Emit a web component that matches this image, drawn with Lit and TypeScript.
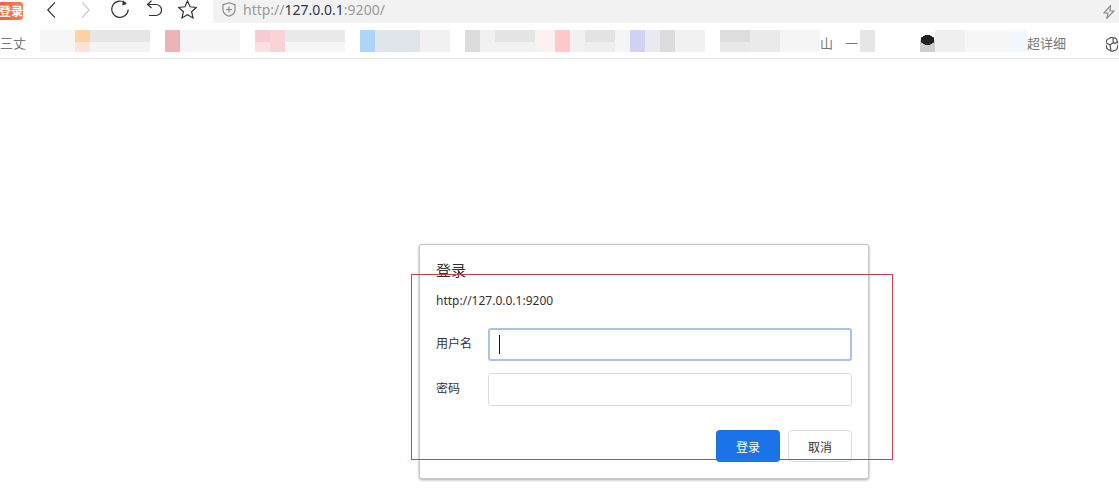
import { LitElement, html, css, svg } from "lit";
import { customElement } from "lit/decorators.js";

type Seg = { w: number; a: string; b?: string; t?: string; bg?: string };
const segs: Seg[] = [
  { w: 26, a: "#fff", t: "三丈" }, { w: 14, a: "#fff" },
  { w: 35, a: "#f6f6f6" }, { w: 15, a: "#fdd3a6", b: "#fde2da" }, { w: 60, a: "#e6e6e6", b: "#f3f3f3" },
  { w: 15, a: "#fff" }, { w: 15, a: "#ecb4b9" }, { w: 60, a: "#f5f5f5" }, { w: 15, a: "#fff" },
  { w: 15, a: "#f7ccd0", b: "#fbe0e2" }, { w: 15, a: "#f7d4d6" }, { w: 60, a: "#e9e9e9", b: "#f5f5f5" }, { w: 15, a: "#fff" },
  { w: 15, a: "#aed4fa" }, { w: 45, a: "#dfe5ea" }, { w: 30, a: "#f1f1f1" }, { w: 15, a: "#fff" },
  { w: 15, a: "#dcdcdc" }, { w: 15, a: "#f1f1f1" }, { w: 40, a: "#e5e5e5", b: "#f1f1f1" }, { w: 5, a: "#f4f4f4" }, { w: 15, a: "#fdf1f1" },
  { w: 15, a: "#ffc9c9" }, { w: 15, a: "#f1f1f1" }, { w: 30, a: "#e3e3e3", b: "#eee" }, { w: 15, a: "#f5f5f5" },
  { w: 15, a: "#d2d2f7" }, { w: 15, a: "#e9e9f0" }, { w: 15, a: "#dcdcdc" }, { w: 30, a: "#f1f1f1" }, { w: 15, a: "#fff" },
  { w: 30, a: "#dcdddd", b: "#e8e8e8" }, { w: 30, a: "#eaeaea" }, { w: 40, a: "#f5f5f5" },
  { w: 25, a: "#fff", t: "山" }, { w: 15, a: "#fff", t: "一" }, { w: 15, a: "#e6e6e6" }, { w: 45, a: "#fff" },
  { w: 15, a: "#cfcfcf", bg: "radial-gradient(ellipse 7px 5px at 50% 10px, #222 99%, transparent), linear-gradient(#fff 10px, #cfcfcf 10px)" }, { w: 30, a: "#f0f0f0" }, { w: 45, a: "#f7f7f7" },
  { w: 17, a: "#f3f8fe" }, { w: 78, a: "#fff", t: "超详细" },
];

const icon = (cls: string, w: number, h: number, body: unknown) => html`
  <svg class=${cls} width=${w} height=${h} viewBox="0 0 ${w} ${h}" fill="none" stroke="currentColor" stroke-width="1.2">${body}</svg>`;

@customElement("app-root")
export class AppRoot extends LitElement {
  static styles = css`
    :host { display: block; position: relative; width: 1119px; height: 493px; overflow: hidden; background: #fff;
      font-family: "Noto Sans", "Noto Sans CJK SC", sans-serif; color: #202124; }
    .toolbar { display: flex; align-items: flex-start; height: 23px; }
    .badge { width: 23px; height: 18px; margin-top: 2px; background: linear-gradient(90deg, #f4623a, #fb8058); border-radius: 0 3px 3px 0;
      color: #fff; font: 700 12px/18px "Noto Sans CJK SC", sans-serif; display: flex; justify-content: flex-end; overflow: hidden; white-space: nowrap; }
    svg { display: block; flex: none; color: #333; }
    .back { margin: 2px 0 0 24px; }
    .fwd { margin: 2px 0 0 27px; color: #c9c9c9; }
    .reload { margin: 0 0 0 20px; }
    .undo { margin: 0 0 0 16px; }
    .star { margin: 0 0 0 16px; }
    .addr { flex: 1; height: 23px; margin-left: 16px; background: #f2f2f2; display: flex; align-items: center; padding-left: 9px; }
    .shield { color: #8a8a8a; margin-top: -4px; }
    .url { margin-left: 7px; font-size: 14px; color: #9a9a9a; white-space: nowrap; line-height: 18px; margin-top: -4px; }
    .url b { font-weight: 400; color: #33374a; }
    .bolt { margin-left: auto; margin-right: 4px; color: #8a8a8a; }
    .bookmarks { display: flex; height: 36px; padding-top: 7px; box-sizing: border-box; border-bottom: 1px solid #e2e2e2; overflow: hidden; position: relative; }
    .seg { flex: none; height: 22px; font-size: 12px; line-height: 16px; color: #777; white-space: nowrap; }
    .seg.txt { height: 16px; margin-top: 5px; font-size: 13px; }
    .ball { position: absolute; right: 1px; top: 14px; color: #555; }
    .stage { display: flex; padding: 185px 0 0 419px; }
    .dialog { width: 450px; height: 235px; box-sizing: border-box; border: 1px solid #c6c6c6; border-radius: 3px;
      box-shadow: 0 1px 3px rgba(0,0,0,.35); padding: 15px 16px 0; background: #fff; }
    .title { font-size: 15px; line-height: 20px; color: #333; }
    .site { font-size: 12px; line-height: 18px; margin-top: 12px; color: #333; }
    .row { display: grid; grid-template-columns: 52px 364px; align-items: center; font-size: 12px; color: #333; }
    .row span { padding-bottom: 3px; }
    .row.first { margin-top: 18px; }
    .row.second { margin-top: 12px; }
    .field { height: 33px; box-sizing: border-box; border: 1px solid #dadce0; border-radius: 3px; display: flex; align-items: center; padding-left: 10px; background: #fff; }
    .field.focus { border: 2px solid #a9c2e6; padding-left: 9px; }
    .caret { width: 1px; height: 19px; background: #111; }
    .actions { display: flex; justify-content: flex-end; gap: 8px; margin-top: 24px; }
    button { width: 64px; height: 32px; box-sizing: border-box; border-radius: 4px; font: 12px "Noto Sans CJK SC", sans-serif; padding: 0; }
    .primary { background: #1a73e8; color: #fff; border: 0; }
    .ghost { background: #fff; color: #333; border: 1px solid #dadce0; }
    .annot { position: absolute; left: 411px; top: 274px; width: 482px; height: 186px; box-sizing: border-box; border: 1px solid #d43d50; pointer-events: none; }
  `;

  render() {
    return html`
      <div class="toolbar">
        <div class="badge">登录</div>
        ${icon("back", 8, 16, svg`<path d="M8 .5 .8 8 8 15.5"/>`)}
        ${icon("fwd", 8, 16, svg`<path d="M0 .5 7.2 8 0 15.5"/>`)}
        ${icon("reload", 20, 19, svg`<path d="M15.800 3.400A8.200 8.200 0 1 0 18.200 9.500"/><path d="M13 .3l3.800 3.600-4.600 1.500z" fill="currentColor" stroke="none"/>`)}
        ${icon("undo", 16, 18, svg`<path d="M1.500 4.500H10a5.500 5.500 0 0 1 0 11H3"/><path d="M5.500 .8 1.500 4.500 5.500 8" />`)}
        ${icon("star", 19, 19, svg`<path d="M9.500 1l2.600 5.800 6.200.7-4.700 4.200 1.400 6.200-5.500-3.200L4 17.900l1.400-6.200L.7 7.500l6.200-.7z"/>`)}
        <div class="addr">
          ${icon("shield", 14, 15, svg`<path d="M7 .8 13 2.600V8c0 3-2.600 5-6 6.300C3.600 13 1 11 1 8V2.600z"/><path d="M7 4.500v6M4 7.500h6"/>`)}
          <div class="url">http://<b>127.0.0.1</b>:9200/</div>
          ${icon("bolt", 12, 14, svg`<path d="M7.500.6 1 8h4L3.800 13.400 11 6H7z"/>`)}
        </div>
      </div>
      <div class="bookmarks">
        ${segs.map(s => html`<div class="seg ${s.t ? "txt" : ""}" style="width:${s.w}px;background:${s.bg ?? `linear-gradient(${s.a} 55%, ${s.b ?? s.a} 55%)`}">${s.t ?? ""}</div>`)}
        ${icon("ball", 12, 15, svg`<path d="M3.500 1.500a3 3 0 0 1 4-.5 3 3 0 0 1 3.500 3.500 3.500 3.500 0 0 1 .5 5 3.500 3.500 0 0 1-3.500 4 3.500 3.500 0 0 1-4.500-.5 3.500 3.500 0 0 1-3-4 3.500 3.500 0 0 1 0-4.500 3 3 0 0 1 3-3z"/><path d="M7.500 1c-1 2-.5 3 0 4.500s3 .5 3.500-.5M7.500 5.500 4 8l1 5.500M4 8 .5 6"/>`)}
      </div>
      <div class="stage">
        <div class="dialog">
          <div class="title">登录</div>
          <div class="site">http://127.0.0.1:9200</div>
          <div class="row first"><span>用户名</span><div class="field focus"><div class="caret"></div></div></div>
          <div class="row second"><span>密码</span><div class="field"></div></div>
          <div class="actions"><button class="primary">登录</button><button class="ghost">取消</button></div>
        </div>
      </div>
      <div class="annot"></div>
    `;
  }
}
